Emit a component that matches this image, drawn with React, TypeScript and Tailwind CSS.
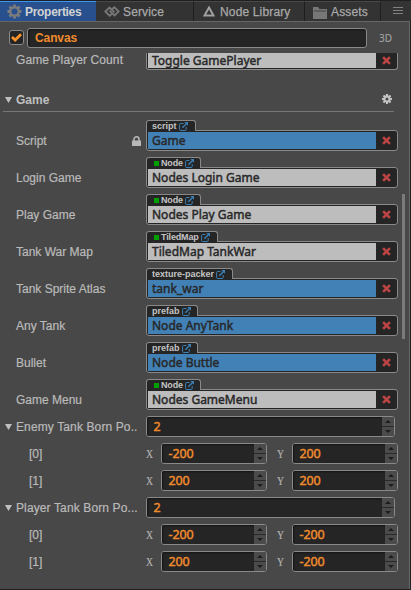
import React from "react";

const labelFont = "font-['Liberation_Sans',Arial,sans-serif]";
const valueFont = "font-['Noto_Sans',sans-serif] font-normal [-webkit-text-stroke:0.45px_currentColor]";

function Gear({ className, size }: { className: string; size: number }) {
  return (
    <svg width={size} height={size} viewBox="0 0 24 24" className={className} fill="none" stroke="currentColor">
      <circle cx="12" cy="12" r="6.2" strokeWidth="5.2" />
      <g strokeWidth="5">
        <path d="M12 0v5M12 19v5M0 12h5M19 12h5M3.5 3.5l3.5 3.5M17 17l3.5 3.5M3.5 20.5l3.5-3.5M17 7l3.5-3.5" />
      </g>
    </svg>
  );
}

function Cross() {
  return (
    <svg width="9" height="9" viewBox="0 0 9 9" stroke="#bd4444" strokeWidth="2.6">
      <path d="M1.1 1.1L7.9 7.9M7.9 1.1L1.1 7.9" />
    </svg>
  );
}

function LinkIcon() {
  return (
    <svg width="9" height="9" viewBox="0 0 9 9" fill="none" stroke="#3d80b5" className="shrink-0">
      <path d="M4.5 1.5H1.6Q.6 1.5 .6 2.5V7.5Q.6 8.5 1.6 8.5H6.2Q7.2 8.5 7.2 7.5V5" strokeWidth="1" />
      <path d="M3.3 5.8L7.4 1.7" strokeWidth="1.4" />
      <path d="M5.3 0H9V3.7Z" fill="#3d80b5" stroke="none" />
    </svg>
  );
}

function Caret() {
  return (
    <svg width="7" height="6" viewBox="0 0 7 6" fill="#c0c0c0" className="shrink-0">
      <path d="M0 0H7L3.5 6Z" />
    </svg>
  );
}

function Tab({ width, gap, text, children }: { width: string; gap: string; text: string; children: React.ReactNode }) {
  return (
    <div className={`flex h-5 shrink-0 items-center border-t border-r border-t-[#484848] border-r-[#1e1e1e] bg-[#333333] text-[#a9a9a9] ${width} ${gap}`}>
      {children}
      <span className="pt-px text-[12px] leading-4 tracking-[0.15px] whitespace-nowrap [-webkit-text-stroke:0.25px_currentColor]">{text}</span>
    </div>
  );
}

function Slot({ value, blue, openTop }: { value: string; blue?: boolean; openTop?: boolean }) {
  return (
    <div
      className={`flex w-[252px] shrink-0 border-[#898989] bg-[#252525] ${
        openTop ? "h-[17px] rounded-b-[3px] border-x border-b px-px pb-px" : "h-[21px] rounded-[3px] rounded-tl-none border p-px"
      }`}
    >
      <div className={`flex w-[228px] items-center pl-1 text-[12px] text-[#282828] ${valueFont} ${blue ? "bg-[#4281b6]" : "bg-[#bdbdbd]"}`}>
        <span className="leading-3 whitespace-nowrap">{value}</span>
      </div>
      <div className="flex flex-1 items-center justify-center pl-px">
        <Cross />
      </div>
    </div>
  );
}

type Asset = { label: string; kind: string; value: string; tab: string; node?: boolean; blue?: boolean; locked?: boolean };

const assets: Asset[] = [
  { label: "Script", kind: "script", value: "Game", tab: "w-[50px]", blue: true, locked: true },
  { label: "Login Game", kind: "Node", value: "Nodes Login Game", tab: "w-[55px]", node: true },
  { label: "Play Game", kind: "Node", value: "Nodes Play Game", tab: "w-[55px]", node: true },
  { label: "Tank War Map", kind: "TiledMap", value: "TiledMap TankWar", tab: "w-[72px]", node: true },
  { label: "Tank Sprite Atlas", kind: "texture-packer", value: "tank_war", tab: "w-[87px]", blue: true },
  { label: "Any Tank", kind: "prefab", value: "Node AnyTank", tab: "w-[52px]", blue: true },
  { label: "Bullet", kind: "prefab", value: "Node Buttle", tab: "w-[52px]", blue: true },
  { label: "Game Menu", kind: "Node", value: "Nodes GameMenu", tab: "w-[55px]", node: true },
];

function AssetRow({ a }: { a: Asset }) {
  return (
    <div className="flex h-[37px]">
      <div className="flex h-[31px] w-[146px] items-end pr-[5px] pb-[2px] pl-4">
        <span className="text-[12px] leading-4 [-webkit-text-stroke:0.2px_currentColor]">{a.label}</span>
        {a.locked && (
          <svg width="9" height="10" viewBox="0 0 9 10" className="mb-[3px] ml-auto" fill="#b8b8b8">
            <path d="M0 4.5H9V10H0Z" />
            <path d="M2 5V3.3a2.5 2.5 0 0 1 5 0V5" fill="none" stroke="#b8b8b8" strokeWidth="1.5" />
          </svg>
        )}
      </div>
      <div>
        <div className={`relative z-10 -mb-px flex h-[11px] items-center gap-[2px] rounded-t-[3px] border border-b-0 border-[#898989] bg-[#252525] pl-[5px] text-[#c4c4c4] ${a.tab}`}>
          {a.node && <span className="ml-[2px] h-[5px] w-[5px] shrink-0 bg-[#009f00]" />}
          <span className={`text-[9px] leading-[9px] font-bold whitespace-nowrap ${a.node ? "tracking-[-0.15px]" : ""}`}>{a.kind}</span>
          <LinkIcon />
        </div>
        <Slot value={a.value} blue={a.blue} />
      </div>
    </div>
  );
}

function NumberBox({ value, width }: { value: string; width: string }) {
  return (
    <div className={`flex h-[21px] shrink-0 overflow-hidden rounded-[3px] border border-[#898989] bg-[#252525] ${width}`}>
      <div className="flex flex-1 items-center pl-[6.5px] shadow-[inset_1px_1px_2px_#151515]">
        <span className={`text-[12.5px] leading-4 tracking-[-0.1px] text-[#f08b2d] ${valueFont}`}>{value}</span>
      </div>
      <div className="flex w-3 flex-col bg-[#4b4b4b]">
        <div className="flex h-[10px] items-center justify-center border-b border-[#292929]">
          <svg width="6" height="3" viewBox="0 0 6 3"><path d="M0 3L3 0L6 3Z" fill="#1c1c1c" /></svg>
        </div>
        <div className="flex flex-1 items-center justify-center">
          <svg width="6" height="3" viewBox="0 0 6 3"><path d="M0 0L3 3L6 0Z" fill="#1c1c1c" /></svg>
        </div>
      </div>
    </div>
  );
}

function Axis({ name }: { name: string }) {
  return (
    <div className="w-[15px] font-['Liberation_Serif',serif] text-[13px] leading-4 text-[#b4b4b4]">
      <span className="inline-block origin-left scale-x-[0.75] pt-px [-webkit-text-stroke:0.2px_currentColor]">{name}</span>
    </div>
  );
}

function PointGroup({ title, points }: { title: string; points: [string, string][] }) {
  return (
    <div>
      <div className="flex h-[27px]">
        <div className="flex h-[21px] w-[146px] items-center pl-[5px]">
          <Caret />
          <span className="ml-1 text-[12px] leading-4 tracking-[0.12px] whitespace-nowrap [-webkit-text-stroke:0.2px_currentColor]">{title}</span>
        </div>
        <NumberBox value="2" width="w-[249px]" />
      </div>
      {points.map(([x, y], i) => (
        <div key={i} className="flex h-[27px]">
          <div className="flex h-[21px] w-[146px] items-center pl-[29px] text-[12px] [-webkit-text-stroke:0.2px_currentColor]">[{i}]</div>
          <div className="flex h-[21px] items-center">
            <Axis name="X" />
            <NumberBox value={x} width="w-[106px]" />
            <div className="w-[10px]" />
            <Axis name="Y" />
            <NumberBox value={y} width="w-[106px]" />
          </div>
        </div>
      ))}
    </div>
  );
}

export default function App() {
  return (
    <div className={`flex h-[590px] w-[411px] flex-col overflow-hidden bg-[#202020] text-[#bababa] ${labelFont}`}>
      <div className="flex h-[21px] border-t border-[#202020] bg-[#333333]">
        <div className="flex w-24 items-center gap-[3px] border-t border-t-[#3a96f0] bg-[#28508e] pl-[7px]">
          <svg width="15" height="15" viewBox="0 0 16 16" fill="none" stroke="#7c7c7c">
            <circle cx="8" cy="8" r="4.5" strokeWidth="2.5" />
            <path d="M8 0.5v3M8 12.5v3M.5 8h3M12.5 8h3M2.7 2.7l2 2M11.3 11.3l2 2M2.7 13.3l2-2M11.3 4.7l2-2" strokeWidth="3" />
          </svg>
          <span className="pt-px text-[12px] leading-4 font-bold tracking-[-0.3px] text-[#d2d2d2]">Properties</span>
        </div>
        <Tab width="w-[98px] pl-2" gap="gap-[3px]" text="Service">
          <svg width="16" height="11" viewBox="0 0 16 11" fill="none" stroke="#777" strokeWidth="1.8">
            <path d="M8.7 7.2L5.6 9.7L1.3 5.5L5.5 1.5L10.5 6.4" />
            <path d="M7.3 3.8L10.4 1.3L14.7 5.5L10.5 9.5L5.5 4.6" />
          </svg>
        </Tab>
        <Tab width="w-[111px] pl-[9px]" gap="gap-[5px]" text="Node Library">
          <svg width="12" height="11" viewBox="0 0 12 11" fill="none" stroke="#a0a0a0" strokeWidth="2">
            <path d="M6 1.5L10.5 9.5H1.5Z" />
          </svg>
        </Tab>
        <Tab width="w-[76px] pl-2" gap="gap-[4px]" text="Assets">
          <svg width="14" height="12" viewBox="0 0 14 12" fill="#777" className="mt-[2px]">
            <path d="M0 0H5L6.5 2H14V12H0Z" />
            <path d="M1 4H13" stroke="#444" />
          </svg>
        </Tab>
        <div className="flex flex-1 items-center justify-center pl-[4px]">
          <svg width="10" height="8" viewBox="0 0 10 8" stroke="#828282">
            <path d="M0 .5H10M0 3.5H10M0 6.5H10" />
          </svg>
        </div>
      </div>
      <div className="flex h-[568px] w-[410px] flex-col border-t border-r border-[#666666] bg-[#484848]">
        <div className="flex h-[31px] items-start pt-[6px]">
          <div className="mt-[2px] ml-[9px] flex h-[15px] w-[15px] items-center justify-center rounded-[3px] border border-[#898989] bg-[#252525]">
            <svg width="11" height="9" viewBox="0 0 11 9" fill="none" stroke="#fd942b" strokeWidth="2.7"><path d="M1 4L4.2 7L10 1.2" /></svg>
          </div>
          <div className="ml-[3px] flex h-5 w-[340px] items-center rounded-[3px] border border-[#898989] bg-[#252525] pl-[7px] shadow-[inset_1px_1px_2px_#151515]">
            <span className="text-[12px] leading-4 font-bold tracking-[-0.1px] text-[#f08b2d]">Canvas</span>
          </div>
          <span className="mt-[2px] ml-[12px] font-['Noto_Sans',sans-serif] text-[10px] leading-4 text-[#a9a9a9]">3D</span>
        </div>
        <div className="flex h-[17px] items-end">
          <span className="mb-[3px] ml-4 w-[130px] text-[12px] leading-[14px] tracking-[0.1px] [-webkit-text-stroke:0.2px_currentColor]">Game Player Count</span>
          <Slot value="Toggle GamePlayer" openTop />
        </div>
        <div className="mt-[18px] mr-[15px] ml-[3px] flex h-6 items-center border-b border-[#767676] pl-[2px]">
          <Caret />
          <span className="ml-1 text-[12px] leading-4 font-bold text-[#c0c0c0]">Game</span>
          <Gear size={10} className="mr-[2px] mb-px ml-auto text-[#c4c4c4]" />
        </div>
        <div className="flex justify-between pt-2">
          <div className="w-[399px]">
            {assets.map((a) => <AssetRow key={a.label} a={a} />)}
            <PointGroup title="Enemy Tank Born Po.." points={[["-200", "200"], ["200", "200"]]} />
            <PointGroup title="Player Tank Born Po..." points={[["-200", "-200"], ["200", "-200"]]} />
          </div>
          <div className="mt-[74px] mr-1 h-[145px] w-[3px] bg-[#7b7b7b]" />
        </div>
      </div>
    </div>
  );
}
